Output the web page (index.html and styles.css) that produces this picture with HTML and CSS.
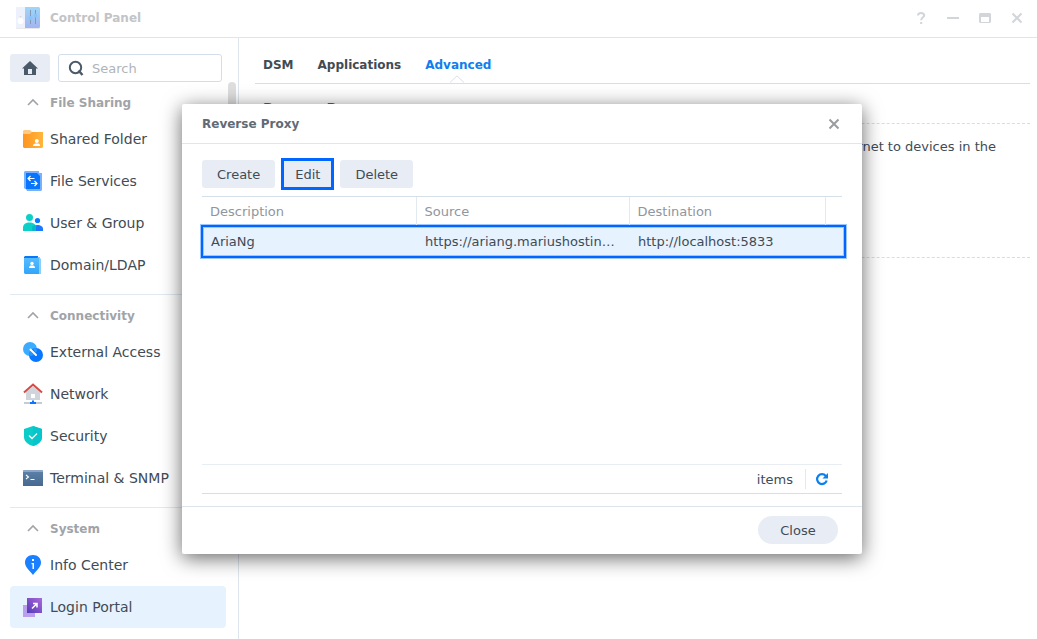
FILE: index.html
```html
<!DOCTYPE html>
<html lang="en">
<head>
<meta charset="utf-8">
<title>Control Panel</title>
<link rel="stylesheet" href="styles.css">
</head>
<body>
<header class="titlebar">
  <svg class="app-icon" width="26" height="24" viewBox="0 0 26 24" aria-hidden="true">
    <defs><linearGradient id="cp" x1="0" y1="0" x2="0" y2="1"><stop stop-color="#9fd6f8"/><stop offset="1" stop-color="#a3b4ef"/></linearGradient></defs>
    <rect x="1" y="3" width="24" height="20" rx="1" fill="#e9e9eb"/>
    <rect x="1" y="1" width="10" height="21" rx="1" fill="#edf1fb"/>
    <path d="M10 1h14l1 1v19l-1 1H10z" fill="url(#cp)"/>
    <circle cx="5.500" cy="15" r="3" fill="#fff"/><circle cx="5.500" cy="10.500" r=".8" fill="#d3d3d8"/>
    <path d="M15.500 4v14M20.500 4v14" stroke="#8499b5"/>
    <circle cx="15.500" cy="12" r="2" fill="#84c6fc"/><circle cx="20.500" cy="9.500" r="2" fill="#84c6fc"/>
  </svg>
  <h1 class="app-title">Control Panel</h1>
  <div class="window-controls">
    <button type="button" aria-label="Help"><svg width="14" height="14" viewBox="0 0 14 14"><path d="M4 4.500C4 2.500 5.200 2 7 2s3.200.7 3.200 2.500S7.200 6.200 7.200 9.200M7.200 11v2" fill="none" stroke="currentColor" stroke-width="2"/></svg></button>
    <button type="button" aria-label="Minimize"><svg width="14" height="14" viewBox="0 0 14 14"><path d="M1 7h12" stroke="currentColor" stroke-width="2"/></svg></button>
    <button type="button" aria-label="Maximize"><svg width="14" height="14" viewBox="0 0 14 14"><path fill-rule="evenodd" d="M2 2h10l1 1v8l-1 1H2l-1-1V3zM3 6v5h8V6z" fill="currentColor"/></svg></button>
    <button type="button" aria-label="Close window"><svg width="14" height="14" viewBox="0 0 14 14"><path d="M2.500 2.500l9 9M11.500 2.500l-9 9" stroke="currentColor" stroke-width="2"/></svg></button>
  </div>
</header>

<div class="workspace">
  <aside class="sidebar">
    <div class="tools">
      <button class="home" type="button" aria-label="Home"><svg width="16" height="16" viewBox="0 0 16 16"><path fill-rule="evenodd" d="M8 1l8 7.500h-2V15H2V8.500H0zM6 9v5h4V9z" fill="#4b5a68"/></svg></button>
      <label class="search">
        <svg width="16" height="16" viewBox="0 0 16 16" aria-hidden="true"><circle cx="7.500" cy="7.500" r="5.700" fill="none" stroke="#4b5a68" stroke-width="2"/><path d="M10.500 10.500l4 4.500" stroke="#4b5a68" stroke-width="2.500"/></svg>
        <input type="text" placeholder="Search" aria-label="Search">
      </label>
    </div>
    <nav class="nav">
      <section class="group">
        <h2 class="group-title"><svg width="12" height="8" viewBox="0 0 12 8"><path d="M1 7l5-5 5 5" fill="none" stroke="currentColor" stroke-width="1.600"/></svg><span>File Sharing</span></h2>
        <a class="item" href="#shared"><svg width="20" height="20" viewBox="0 0 20 20">
          <defs><linearGradient id="fo"><stop stop-color="#ff9420"/><stop offset="1" stop-color="#ffb63c"/></linearGradient></defs>
          <path d="M0 2l1-1h6l2 2h10l1 1v4H0z" fill="#ffc982"/><path d="M0 5h7l2-2h11v15l-1 1H1l-1-1z" fill="url(#fo)"/><circle cx="13.800" cy="12" r="2" fill="#fff"/><path d="M10 17c0-2 1.500-2.500 4-2.500s3 .5 3 2.500z" fill="#fff"/></svg>Shared Folder</a>
        <a class="item" href="#files"><svg width="20" height="20" viewBox="0 0 20 20">
          <path d="M2 0h14v2h3v17l-1 1H4l-1-2H2L1 17V1z" fill="#79b0ff"/><path d="M3 2h11l3 3v13H3z" fill="#0875ff"/><path d="M11.500 7.500H5M7.500 5L5 7.500 7.500 10M8 12.500h6M11.500 10l2.500 2.500-2.500 2.500" fill="none" stroke="#fff" stroke-width="1.200"/></svg>File Services</a>
        <a class="item" href="#users"><svg width="20" height="20" viewBox="0 0 20 20">
          <circle cx="14.500" cy="7.500" r="2.600" fill="#0a78ff"/><path d="M10 18v-3c0-2 2-3 4.500-3s5.500 1 5.500 4v2z" fill="#1a7aff"/><circle cx="6.500" cy="4.500" r="3.500" fill="#0bd0c8"/><path d="M0 18v-3c0-4 3-5.500 6.500-5.500S13 11 13 15v3z" fill="#0bd0c8"/><path d="M9 18v-3c0-2 1.500-3 3.200-3 .6 1 .8 2 .8 3v3z" fill="#08b8c3"/></svg>User &amp; Group</a>
        <a class="item" href="#domain"><svg width="20" height="20" viewBox="0 0 20 20">
          <defs><linearGradient id="bk" x1="0" y1="0" x2="0" y2="1"><stop stop-color="#55bcff"/><stop offset="1" stop-color="#31a5f9"/></linearGradient></defs>
          <path d="M2 1h13v3H1V2z" fill="#0877f8"/><path d="M15 2h2v1l1 1v15H5z" fill="#8acfff"/><path d="M1 3h15v16H2l-1-1z" fill="url(#bk)"/><circle cx="9" cy="8.500" r="1.700" fill="#fff"/><path d="M6 13c0-2 1-2.400 3-2.400s3 .4 3 2.400z" fill="#fff"/></svg>Domain/LDAP</a>
      </section>
      <section class="group">
        <h2 class="group-title"><svg width="12" height="8" viewBox="0 0 12 8"><path d="M1 7l5-5 5 5" fill="none" stroke="currentColor" stroke-width="1.600"/></svg><span>Connectivity</span></h2>
        <a class="item" href="#external"><svg width="20" height="20" viewBox="0 0 20 20">
          <circle cx="7" cy="7" r="7" fill="#3aabff"/><circle cx="13" cy="13" r="7" fill="#0877ff"/><path d="M6 13a7 7 0 0 1 7-7l1 2a7 7 0 0 1-6 6z" fill="#2697ff"/><path d="M7 8l3-1 4 5.500-1.500 1.500L10 12z" fill="#0871ee"/><path d="M7.500 7.500l5.500 5.500" stroke="#fff" stroke-width="2" stroke-linecap="round"/></svg>External Access</a>
        <a class="item" href="#network"><svg width="20" height="22" viewBox="0 0 20 22">
          <path d="M10 3l7 6v8H3V9z" fill="#d0d4db"/><path d="M1 9.500L10 1.500l9 8" fill="none" stroke="#d64b46" stroke-width="2"/><rect x="8" y="11" width="4" height="4" fill="#fff"/><path d="M1 20h18" stroke="#c5cbd2" stroke-width="2"/><path d="M9 17.500h2V19h2v2H7v-2h2z" fill="#0877ff"/></svg>Network</a>
        <a class="item" href="#security"><svg width="20" height="20" viewBox="0 0 20 20">
          <path d="M10 0l9 3v8c0 5-5 8-9 9-4-1-9-4-9-9V3z" fill="#0bccc8"/><path d="M10 0l9 3v8c0 5-5 8-9 9z" fill="#08c4cb"/><path d="M6 9.500l3 3 5-5" fill="none" stroke="#fff" stroke-width="1.400"/></svg>Security</a>
        <a class="item" href="#terminal"><svg width="20" height="20" viewBox="0 0 20 20">
          <defs><linearGradient id="te" x1="0" y1="0" x2="0" y2="1"><stop stop-color="#5d81a8"/><stop offset="1" stop-color="#47698f"/></linearGradient></defs>
          <path d="M0 3l1-1h18l1 1v15H0z" fill="url(#te)"/><path d="M0 3l1-1h18l1 1v1H0z" fill="#8aa5c5"/><path d="M3 7l2.500 2L3 11M7.500 11.500h4" fill="none" stroke="#fff" stroke-width="1.100"/></svg>Terminal &amp; SNMP</a>
      </section>
      <section class="group">
        <h2 class="group-title"><svg width="12" height="8" viewBox="0 0 12 8"><path d="M1 7l5-5 5 5" fill="none" stroke="currentColor" stroke-width="1.600"/></svg><span>System</span></h2>
        <a class="item" href="#info"><svg width="20" height="20" viewBox="0 0 20 20">
          <path d="M10 0c5 0 8 3.500 8 7.500 0 4.500-4.500 8-8 12.500-3.500-4.500-8-8-8-12.500C2 3.500 5 0 10 0z" fill="#1b80ff"/><path d="M9 4h2v2H9zM8.500 8H11v6H9.500V9.200h-1z" fill="#fff"/></svg>Info Center</a>
        <a class="item selected" href="#login" aria-current="page"><svg width="20" height="20" viewBox="0 0 20 20">
          <defs><linearGradient id="lp" x1="0" y1="1" x2="1" y2="0"><stop stop-color="#5537b8"/><stop offset="1" stop-color="#aa6ad8"/></linearGradient></defs>
          <path d="M0 8h12v12H0z" fill="#b9a0ee"/><path d="M4 1h15v15H4z" fill="url(#lp)"/><path d="M9 11.500l4.500-4.500M10 6.500h4v4" fill="none" stroke="#fff" stroke-width="1.500"/></svg>Login Portal</a>
      </section>
    </nav>
    <div class="scrollbar"></div>
  </aside>

  <main class="content">
    <nav class="tabs">
      <a href="#dsm">DSM</a>
      <a href="#applications">Applications</a>
      <a class="active" href="#advanced" aria-current="page">Advanced<svg class="notch" width="16" height="8" viewBox="0 0 16 8"><path d="M1 8L8 1l7 7z" fill="#fff"/><path d="M1 7.500L8 .800l7 6.700" fill="none" stroke="#d9e1ea"/></svg></a>
    </nav>
    <section class="panel">
      <h2 class="panel-title">Reverse Proxy</h2>
      <div class="panel-body"><p>Set up reverse proxy rules to enable trusted users to remotely connect safely from the Internet to devices in the local network.</p></div>
    </section>
  </main>
</div>

<div class="dialog" role="dialog" aria-labelledby="dialog-title">
  <header class="dialog-head">
    <h2 id="dialog-title">Reverse Proxy</h2>
    <button type="button" aria-label="Close dialog"><svg width="14" height="14" viewBox="0 0 14 14"><path d="M2.500 2.500l9 9M11.500 2.500l-9 9" stroke="currentColor" stroke-width="2"/></svg></button>
  </header>
  <div class="dialog-body">
    <div class="actions">
      <button type="button">Create</button>
      <button type="button" class="marked">Edit</button>
      <button type="button">Delete</button>
    </div>
    <div class="grid">
      <table>
        <colgroup><col class="col-desc"><col class="col-source"><col class="col-dest"><col></colgroup>
        <thead><tr><th>Description</th><th>Source</th><th>Destination</th><td></td></tr></thead>
        <tbody><tr><td>AriaNg</td><td>https://ariang.mariushosting.com:443</td><td>http://localhost:5833</td><td></td></tr></tbody>
      </table>
    </div>
    <div class="status">
      <span>items</span>
      <button type="button" aria-label="Refresh"><svg width="14" height="14" viewBox="0 0 14 14"><path d="M10.800 4A4.900 4.900 0 1 0 11.700 8.500" fill="none" stroke="#0b80f0" stroke-width="2.200"/><path d="M13 1v5.500H7.500z" fill="#0b80f0"/></svg></button>
    </div>
  </div>
  <footer class="dialog-foot"><button type="button">Close</button></footer>
</div>
</body>
</html>
```
FILE: styles.css
```css
*, *::before, *::after { box-sizing: border-box; }
body {
  display: flex;
  flex-direction: column;
  min-height: 100vh;
  margin: 0;
  overflow: hidden;
  background: #fff;
  color: #414b55;
  font: 13px/20px Verdana, "DejaVu Sans", sans-serif;
}
h1, h2, p { margin: 0; }
h1, h2, .tabs { font: bold 12px/20px Verdana, "DejaVu Sans", sans-serif; }
a { color: inherit; text-decoration: none; }
button { padding: 0; border: 0; background: none; color: inherit; font: inherit; }
svg { display: block; flex: none; }

.titlebar { display: flex; align-items: center; height: 38px; padding: 0 12px 2px 15px; border-bottom: 1px solid #dfe5ed; }
.app-title { margin-left: 9px; color: #c2c4c6; }
.window-controls { display: flex; gap: 16px; margin-left: auto; color: #d2d5d9; }
.window-controls button { display: grid; place-items: center; width: 16px; height: 16px; }

.workspace { display: flex; flex: 1; }
.sidebar { position: relative; width: 239px; padding: 16px 12px 11px 10px; border-right: 1px solid #dfe5ed; }
.tools { display: flex; gap: 8px; padding-right: 4px; }
.home { display: grid; place-items: center; width: 40px; height: 28px; border-radius: 3px; background: #e8edf5; }
.search { display: flex; flex: 1; align-items: center; gap: 8px; height: 28px; padding: 0 9px; border: 1px solid #d3deea; border-radius: 3px; }
.search input { width: 100%; min-width: 0; padding: 2px 0 0; border: 0; outline: 0; background: none; color: inherit; font: inherit; }
.search input::placeholder { color: #b0b4b8; opacity: 1; }
.nav { padding-top: 4px; }
.group + .group { margin-top: 8px; padding-top: 4px; border-top: 1px solid #e3e9f1; }
.group-title { display: flex; align-items: center; gap: 11px; height: 32px; padding-left: 17px; color: #a0a4a8; }
.group-title span { padding-top: 2px; }
.item { display: flex; align-items: center; gap: 7px; height: 42px; padding-left: 13px; border-radius: 4px; font-size: 14px; }
.item.selected { background: #e6f2fe; }
.scrollbar { position: absolute; top: 44px; right: 2px; width: 8px; height: 320px; border-radius: 4px; background: #dedede; }

.content { flex: 1; padding: 16px 7px 0 16px; }
.tabs { display: flex; gap: 24px; height: 30px; padding: 0 8px; border-bottom: 1px solid #d5dfe8; }
.tabs a { position: relative; padding-top: 1px; }
.tabs .active { color: #0b80ee; }
.notch { position: absolute; bottom: 0; left: 50%; margin-left: -9px; }
.panel { padding-top: 14px; }
.panel-title { height: 26px; padding: 0 8px; border-bottom: 1px dashed #d8dde3; color: #0b72cd; font-size: 13px; }
.panel-body { height: 134px; padding: 13px 24px 0 8px; border-bottom: 1px dashed #d8dde3; }

.dialog {
  position: absolute;
  top: 104px;
  left: 182px;
  display: flex;
  flex-direction: column;
  width: 680px;
  height: 450px;
  border-radius: 2px;
  background: #fff;
  box-shadow: 0 4px 20px rgba(0, 0, 0, .6);
}
.dialog-head { display: flex; align-items: center; justify-content: space-between; height: 40px; padding: 0 20px; border-bottom: 1px solid #e0e6ed; color: #606b75; }
.dialog-head button { display: grid; place-items: center; width: 16px; height: 16px; color: #999da1; }
.dialog-body { display: flex; flex: 1; flex-direction: column; padding: 16px 20px 12px; }
.actions { display: flex; gap: 8px; padding-bottom: 8px; }
.actions button { height: 28px; padding: 2px 15px 0; border-radius: 3px; background: #e8edf5; }
.actions .marked { padding: 2px 12px 0; border-radius: 0; outline: 3px solid #0066ff; outline-offset: -1px; }

.grid { position: relative; isolation: isolate; flex: 1; border-top: 1px solid #d5dfe8; }
.grid::after {
  content: "";
  position: absolute;
  z-index: -1;
  top: 28px;
  right: -4px;
  left: -1px;
  height: 33px;
  border: 2px solid #0066ff;
  background: #e6f2fe;
  box-shadow: 0 0 0 1px #9cc6ff, inset 0 0 0 1px #9cc6ff;
}
table { width: 100%; border-collapse: collapse; table-layout: fixed; }
.col-desc { width: 214px; }
.col-source { width: 213px; }
.col-dest { width: 196px; }
th, td { height: 28px; padding: 2px 8px 0; overflow: hidden; font-weight: normal; text-align: left; text-overflow: ellipsis; white-space: nowrap; }
thead th { border-right: 1px solid #e3e9f1; color: #8f969d; }
tbody td { height: 32px; padding: 2px 9px 0; }

.status { display: flex; align-items: center; justify-content: flex-end; height: 30px; border-top: 1px solid #e8edf3; border-bottom: 1px solid #d5dfe8; }
.status span { padding-top: 2px; }
.status button { display: grid; place-items: center; width: 37px; height: 20px; margin-left: 12px; padding-right: 4px; border-left: 1px solid #e3e9f1; }
.dialog-foot { display: flex; justify-content: flex-end; padding: 9px 24px 10px; border-top: 1px solid #dfe5ed; }
.dialog-foot button { width: 80px; height: 28px; padding-top: 2px; border-radius: 14px; background: #e8edf5; }
```
